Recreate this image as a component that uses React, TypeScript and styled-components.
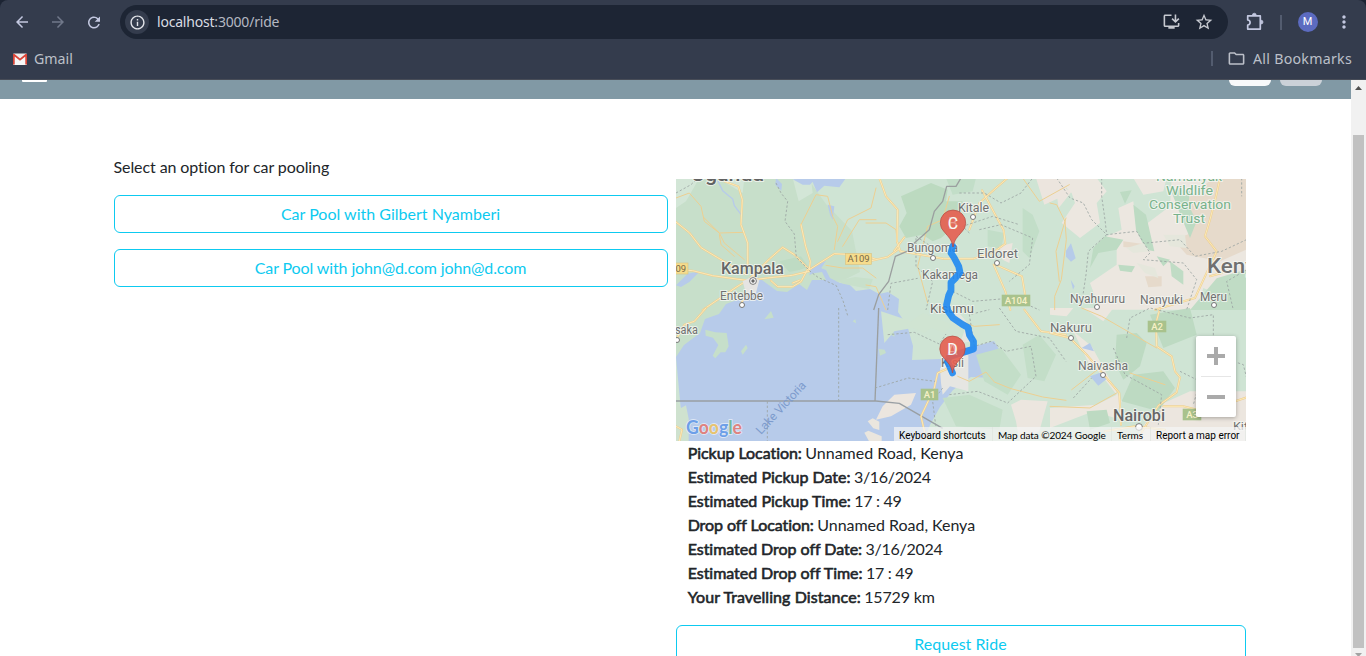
import React from "react";
import styled, { createGlobalStyle } from "styled-components";
import { MdArrowBack, MdArrowForward, MdRefresh, MdInfoOutline, MdStarBorder, MdOutlineFolder, MdMoreVert, MdOutlineInstallDesktop } from "react-icons/md";

const GlobalStyle = createGlobalStyle`
  * { box-sizing: border-box; }
  body { margin: 0; background: #fff; overflow: hidden; font-family: Lato, "Liberation Sans", sans-serif; }
`;

const Window = styled.div`
  display: flex;
  flex-direction: column;
  width: 1366px;
  height: 656px;
  overflow: hidden;
  background: #fff;
`;

const Chrome = styled.header`
  flex: none;
  height: 80px;
  background: #1c2433;
  font-family: "Noto Sans", "Open Sans", sans-serif;
`;

const ChromeInner = styled.div`
  height: 80px;
  background: #343c4d;
  border-radius: 8px 8px 0 0;
  border-bottom: 1px solid #474c57;
`;

const Toolbar = styled.div`
  display: flex;
  align-items: center;
  height: 44px;
  padding: 0 0 0 13px;
  color: #c3c8e0;
`;

const NavIcon = styled.span<{ $dim?: boolean; $gap?: number }>`
  display: flex;
  align-items: center;
  justify-content: center;
  width: 18px;
  height: 18px;
  margin-right: ${(p) => p.$gap ?? 18}px;
  color: ${(p) => (p.$dim ? "#70788a" : "#c3c8e0")};
`;

const AddressBar = styled.div`
  display: flex;
  flex: none;
  align-items: center;
  width: 1108px;
  height: 34px;
  padding: 0 14px 0 5px;
  border-radius: 17px;
  background: #1d2534;
  color: #d5d8df;
`;

const InfoBadge = styled.span`
  display: flex;
  align-items: center;
  justify-content: center;
  width: 24px;
  height: 24px;
  border-radius: 50%;
  background: #343c4d;
  color: #e3e5ea;
`;

const Url = styled.span`
  flex: 1;
  margin-left: 8px;
  font-size: 14px;
  line-height: 20px;
  letter-spacing: -0.2px;
  color: #d9dce3;
  span { color: #b4b8c2; }
`;

const AddressActions = styled.span`
  display: flex;
  gap: 13px;
  color: #c6c9d0;
`;

const ToolbarEnd = styled.div`
  display: flex;
  align-items: center;
  margin-left: 17px;
`;

const Separator = styled.span<{ $height: number; $left?: number }>`
  flex: none;
  width: 1.5px;
  height: ${(p) => p.$height}px;
  margin-left: ${(p) => p.$left ?? 0}px;
  background: #535c6f;
`;

const Avatar = styled.span`
  display: flex;
  align-items: center;
  justify-content: center;
  width: 20px;
  height: 20px;
  margin: 0 16px;
  border-radius: 50%;
  background: #5c6bc0;
  color: #fff;
  font: 400 11px/20px Roboto, sans-serif;
`;

const Bookmarks = styled.div`
  display: flex;
  align-items: center;
  justify-content: space-between;
  height: 29px;
  padding: 0 14px 0 12px;
  color: #bcc0c9;
  font-size: 14.2px;
`;

const Bookmark = styled.span`
  display: flex;
  align-items: center;
`;

const BookmarkText = styled.span<{ $spacing?: number }>`
  margin-left: 6px;
  letter-spacing: ${(p) => p.$spacing ?? 0}px;
  white-space: nowrap;
`;

const FolderIcon = styled(MdOutlineFolder)`
  margin-left: 14px;
  margin-right: 1px;
`;

const Viewport = styled.div`
  display: flex;
  flex: 1;
  min-height: 0;
`;

const Page = styled.main`
  flex: 1;
  overflow: hidden;
  background: #fff;
`;

const SiteBar = styled.div`
  display: flex;
  justify-content: space-between;
  height: 19px;
  padding: 0 29px 0 22px;
  background: #8199a5;
`;

const MenuEdge = styled.span`
  width: 25px;
  height: 2px;
  border-radius: 0 0 1px 1px;
  background: #fff;
`;

const BarButtons = styled.div`
  display: flex;
  gap: 9px;
`;

const BarButton = styled.span<{ $color: string }>`
  width: 42px;
  height: 6px;
  border-radius: 0 0 6px 6px;
  background: ${(p) => p.$color};
`;

const Columns = styled.div`
  display: grid;
  grid-template-columns: 554px 570px;
  column-gap: 8px;
  padding: 56px 0 0 114px;
`;

const Options = styled.section`
  display: flex;
  flex-direction: column;
  gap: 16px;
`;

const Prompt = styled.p`
  margin: 0 0 0 -0.5px;
  font-size: 16px;
  line-height: 24px;
  letter-spacing: -0.09px;
  color: #212529;
`;

const OutlineButton = styled.button<{ $spacing?: number }>`
  flex: none;
  width: 100%;
  height: 38px;
  padding: 0 1px 0 0;
  border: 1px solid #0dcaf0;
  border-radius: 6px;
  background: transparent;
  color: #0dcaf0;
  font: 400 16px/24px Lato, sans-serif;
  letter-spacing: ${(p) => p.$spacing ?? 0.01}px;
`;

const Trip = styled.section`
  padding-top: 24px;
`;

const MapFrame = styled.div`
  position: relative;
  height: 262px;
  overflow: hidden;
`;

const Zoom = styled.div`
  position: absolute;
  right: 10px;
  bottom: 24px;
  display: flex;
  flex-direction: column;
  align-items: center;
  width: 40px;
  height: 81px;
  border-radius: 2px;
  background: #fff;
  box-shadow: 0 1px 4px rgba(0, 0, 0, 0.3);
`;

const Credits = styled.div`
  position: absolute;
  right: 0;
  bottom: 0;
  display: flex;
  align-items: center;
  width: 352px;
  height: 14px;
  color: #000;
  font-size: 10px;
  white-space: nowrap;
`;

const Credit = styled.span<{ $width: number; $roboto?: boolean; $spacing?: number }>`
  width: ${(p) => p.$width}px;
  height: 14px;
  padding-left: 5px;
  border-right: 1px solid rgba(220, 226, 220, 0.6);
  background: rgba(245, 245, 245, 0.7);
  font-family: ${(p) => (p.$roboto ? "Roboto" : "Lato")}, sans-serif;
  line-height: ${(p) => (p.$roboto ? 17 : 16)}px;
  letter-spacing: ${(p) => p.$spacing ?? 0}px;
`;

const Details = styled.dl`
  margin: 0 0 16px;
  padding-left: 11.7px;
  color: #212529;
  font-size: 16px;
  line-height: 24px;
`;

const Detail = styled.div<{ $name: number; $value: number }>`
  display: flex;
  gap: 3.5px;
  height: 24px;
  white-space: nowrap;
  dt { -webkit-text-stroke: 0.6px #212529; letter-spacing: ${(p) => p.$name}px; }
  dd { margin: 0; letter-spacing: ${(p) => p.$value}px; }
`;

const Scrollbar = styled.aside`
  display: flex;
  flex-direction: column;
  align-items: center;
  width: 15px;
  padding-top: 6px;
  background: #f1f1f1;
  svg { flex: none; }
`;

const Thumb = styled.span`
  flex: none;
  width: 11px;
  height: 513px;
  margin: 44px 0 5px;
  background: #c1c1c1;
`;

const Gmail = () => (
  <svg width="16" height="16" viewBox="0 0 16 16">
    <rect x="1" y="2.500" width="14" height="11.500" rx="1" fill="#ececec" />
    <path d="M3 14V5.500l5 4.200 5-4.200V14z" fill="#f7f7f7" />
    <path d="M1 13.500V3h1.500L8 7.600 13.500 3H15v10.500h-1.700V5.400L8 9.800 2.700 5.400v8.100z" fill="#db4437" />
  </svg>
);

const Puzzle = () => (
  <svg width="20" height="20" viewBox="0 0 20 20" fill="none" stroke="#c3c8e0" strokeWidth="1.7" strokeLinejoin="round">
    <path d="M2.700 3.900h12.600v13.200H2.700v-4.100c3.200-.4 3.200-4.600 0-5z" />
    <path d="M7.400 3.100a1.900 1.900 0 0 1 3.800 0zM16.100 8.200a1.900 1.900 0 0 1 0 3.800z" fill="#c3c8e0" strokeWidth=".7" />
  </svg>
);

type TileProps = { x: number; y: number; children: React.ReactNode };
const Tile = ({ x, y, children }: TileProps) => <g transform={`translate(${x} ${y}) scale(.33333)`} strokeLinejoin="round">{children}</g>;

const Road = ({ d, w = 6 }: { d: string; w?: number }) => (
  <g fill="none" strokeLinejoin="round" strokeLinecap="round">
    <path d={d} stroke="#edcf91" strokeWidth={w} />
    {w > 5 && <path d={d} stroke="#fce9b8" strokeWidth={w - 3} />}
  </g>
);
const Border = ({ d }: { d: string }) => <path d={d} fill="none" stroke="#9da6a3" strokeWidth="2.6" strokeDasharray="7 6" />;

type LabelProps = { x: number; y: number; w: number; size?: number; bold?: boolean; color?: string; children: string };
const Label = ({ x, y, w, size = 12, bold, color = "#707070", children }: LabelProps) => (
  <text x={x} y={y} textLength={w} lengthAdjust="spacingAndGlyphs" fontSize={size} fontWeight={bold ? 500 : 400} fill={color}
    stroke="#f5f7f3" strokeOpacity=".8" strokeWidth="2" paintOrder="stroke" strokeLinejoin="round">{children}</text>
);
const Shield = ({ x, y, w, h = 11, green, children }: { x: number; y: number; w: number; h?: number; green?: boolean; children: string }) => (
  <g>
    <rect x={x} y={y} width={w} height={h} fill={green ? "#a9c28c" : "#f6dc8c"} stroke={green ? "#a9c28c" : "#d8c283"} strokeWidth=".6" />
    <text x={x + w / 2} y={y + h / 2 + 3.300} textAnchor="middle" fontSize="9.500" fontWeight={green ? 500 : 400} fill={green ? "#f7f1c7" : "#766a48"}>{children}</text>
  </g>
);
const Town = ({ x, y, r = 2.500 }: { x: number; y: number; r?: number }) => <circle cx={x} cy={y} r={r} fill="#fff" stroke="#777" strokeWidth="1" />;
const Pin = ({ x, y, letter, under }: { x: number; y: number; letter: string; under: string }) => (
  <g opacity=".9">
    <path d={`M${x} ${y}c-1.500-8-4.500-10-8.500-14.800a12.700 12.700 0 1 1 17 0C${x + 4.500} ${y - 10} ${x + 1.500} ${y - 8} ${x} ${y}z`} fill="#e65f51" stroke="#b7463c" strokeWidth=".8" />
    <text x={x} y={y - 18.500} textAnchor="middle" fontSize="16" fill="#fff" fillOpacity=".35">{under}</text>
    <text x={x} y={y - 18.500} textAnchor="middle" fontSize="16" fill="#fff">{letter}</text>
  </g>
);

const RouteMap = () => (
  <svg width="570" height="262" viewBox="0 0 570 262" fontFamily="Roboto, sans-serif" display="block">
    <rect width="570" height="262" fill="#cfe4d4" />
    <path d="M0 0H132L150 25 176 52 184 93 150 110 0 178z" fill="#c7dfca" />
    <Tile x={0} y={-1}>
      <path d="M0 0H70L30 70 0 90zM125 0h80l-5 45-50-30zM350 0h55l5 45-42 25z" fill="#d3e6d7" />
      <path d="M310 250l65-15 25 35-60 12z" fill="#bedbc3" />
    </Tile>
    <Tile x={190} y={-1}>
      <path d="M105 55l90-40 50 20-5 35 50 0-5 60-60 50-25 10-30-20-50 10-20-35 22-40z" fill="#bcdac0" />
      <path d="M240 0h90l-10 40-60 10zM470 90l30 20 20 50-30 80-20-20zM365 155l50 10-10 50-40-10z" fill="#c2dec8" />
      <path d="M510 0h90v50l-65 30zM400 205l40-10-10 60-20-10zM568 20l50 20-40 50z" fill="#ece5de" />
    </Tile>
    <Tile x={374} y={-1}>
      <path d="M20 0h120l30 40-30 35 10 60-60 45-55-45 40-60-10-30zM205 90l45-20 10 90 100-75 5-85H600v390L460 330l-20 65H150l-30-80 80-55 0-50-30-35 45-20zM250 0h100l-10 40-60 10z" fill="#ece7e0" />
      <path d="M390 80l100-80H600v210l-90 40-100-20-40-45 55-20zM220 190l60 8-20 12-40-3zM285 295l50 0 0 30-40 3z" fill="#e6dacb" />
      <path d="M250 80l38 30 25 110-25-5-30-60zM165 175l55 10-20 30-55 10-25 45 10-60zM210 42l35-5-20 40zM205 260l50 5-10 18-35-5zM360 30l60 10-5 40 25 50-20 50-25-60zM320 235l40 10-20 20z" fill="#bddbc3" />
      <path d="M260 255l55 15 10 30-40-15zM340 170l65 0 5 40-50-5zM230 210l50-15 20 25-50 5z" fill="#e5e7dc" />
      <path d="M420 396l80-95 100-30v125zM360 250l40 30 0 40-35-25z" fill="#c0dcc5" />
      <path d="M48 218l15-22 14 45-14 10-15-15zM62 305l12 20-5 10z" fill="#b6cbe9" />
    </Tile>
    <Tile x={374} y={129}>
      <path d="M70 70l55 45 90 165-20 50-65-20-130 50v-85l100-50 40-10zM0 0h70l-20 25-50-5z" fill="#ece7df" />
      <path d="M0 240l60-70 70 0 70 90-60 30-140 10z" fill="#cfe4d4" />
      <path d="M320 295l100-45h180v150H250zM100 0h90l-30 40z" fill="#ece6df" />
      <path d="M200 80l60-5 30 30-20 70-50 40-25-50zM300 20l120-20 20 80-100 40zM250 200l90-10 35 50-50 70-110-30zM110 310l60-5 10 40-60 20z" fill="#bddac2" />
      <path d="M120 205l35-12 15 20-25 20zM95 120l25-15 12 25z" fill="#b5caea" />
    </Tile>
    <path d="M0 178l8-12 16-12 5-14 14-5 7-10 19-7 8-12 5-8 8 6 11 8 10 1 9-6 8-4 9-8 5-7 8 3 4 8 10 5 9 1 7 7 14-2 9 5 9-2 11 7-1 13 4 6 5 7 6 21-1 14 29-1 20-11 15-2 18-5 6 10-10 10 3 17-22-1-18 13-13 17-10 18-11 27H12l-1-22-6-19z" fill="#b7cbea" />
    <path d="M116 94l13-5 4 6 13-2 4 8-14 0-5 10-8-6zM160 102l19-4 18 2-4 10-25-5z" fill="#c8e0cb" />
    <Tile x={0} y={-1}>
      <path d="M300 0l18 18-2 20-18-18zM350 4l70-4-18 20-22 0zM405 0h105l-20 28-45-5-22 20zM455 80l20 5-5 40-8-15zM0 322l35-35 37-7-32 32-25 15z" fill="#b7cbea" />
      <path d="M125 8l15 30 30 25 5 20 20 26" fill="none" stroke="#b7cbea" strokeWidth="4" />
      <path d="M405 268l25-10 20-10-18 28-32 16z" fill="#b7cbea" />
    </Tile>
    <Tile x={0} y={129}>
      <path d="M88 65l30 8 34 2 6 40-10 18-14 0-16 18-8-8 17-32-16-22-22-6zM195 130l15-20 5 10-15 20zM265 34l20-25 8 20zM530 40l8-6 2 12z" fill="#c6dfca" />
      <path d="M0 275l15 25 15-8 8 40 0 70H0z" fill="#cfe2cf" />
      <path d="M575 340l15-9 20 10v25l-18-5zM565 374l12-6 40 17v20h-35z" fill="#eae6de" />
    </Tile>
    <Tile x={190} y={129}>
      <path d="M45 10l90 30 35-25 90 35-25 25-40-15-20 15-35-15-55 10-30 35z" fill="#d0e4d2" />
      <path d="M38 123l18 2 4 10-18 8zM70 78l14-4 2 12z" fill="#c6dfca" />
      <path d="M222 180l60-40 25 0 0 110-55-15-22 25-5-35z" fill="#e6e6e2" />
      <path d="M85 260l65-5-15 35-60 35-45 10 20-40zM435 290l30-15 80 5-25 90-60 30-10-60z" fill="#ece6df" />
      <path d="M330 140l75-20 60 80-40 60-70-40zM470 110l50-30 50 60-35 80-50-10zM230 270l80-10 100 45-10 60-130-10z" fill="#c3dec8" />
      <path d="M252 35l45 30-15 40 45-5-10-40-50-60z" fill="#e4e6df" />
    </Tile>
    <Tile x={0} y={-1}>
      <Road w={3} d="M0 60L40 45 75 85 85 130 130 165 145 195 205 245M85 120L130 165 205 163M130 170l5 30 40 35M375 140l45-90 35 5 15 60 15 30-10 70M500 205l50-80h50M600 30l-15 60-70 35-30 65M450 262l50 8h60l40 30" />
      <Road d="M145 10l42 15 12 40-4 75 20 55v75M0 132l40 32 35 45 50 30 85 50M0 275l50 3 60 15 100 14M80 396l100-68 40-25 60-60 40-35 35 22 45 45M400 275l75-48 90 5 35 12M375 140l14 65 14 45-4 30-50 12-75 8-50 6M285 308l20 18 45 0 25-15 20-38M350 315l20-8M220 305l-12 50-15 25" />
      <path d="M200 310l30-15 20 12-12 45-30-12z" fill="#e5e4e2" />
      <Border d="M0 45l45-25 20-20M300 15l15 30 20 25-8 60 28 38 6 70 45 45 20 15 55 25 20 45 15 48" />
    </Tile>
    <Tile x={190} y={-1}>
      <Road w={3} d="M0 135l60 0 30 20 5 50M60 396l-30-70-30-5M250 55l-20 70-45 20-30 120 30 110M600 120l-30 100 10 90M470 0l50 70 90-50" />
      <Road d="M40 0l20 55 35 40-2 95 10 30 130 22 90 0 60-20 35-25-5-40-65-120M0 252l65-15 35-25M115 178l-30 40M310 155l30-80 50-45 35-30M383 260l35 80 15 56M388 260l80 35 10 60" />
      <path d="M285 0l-15 25-28 0-12 45-25 30-15 55-45 40-22 25-35 15-20 75-30 40-15 46" fill="none" stroke="#9b9f9f" strokeWidth="4" />
      <Border d="M280 45h75l50 30 60-30 35-45M340 155l65-15 95 40-10 80-60 50M210 215l-60-40v90l50 45-20 86M260 340l60 30 120-10 80 36M310 165l-20-20 90-30 80 25M65 396l10-80 80-15" />
    </Tile>
    <Tile x={374} y={-1}>
      <Road w={3} d="M0 75l20 5 25 50 4 55-15 120-20 50v40" />
      <Road d="M510 0l-12 55-18 70-15 50 35 45-35 75-30 65-120 35M480 295l35-10" />
      <Border d="M20 0l40 60 40 15 25 50 45 45-55 50-7 70-15 100M155 0v55l10 70 5 45 90-10 40 65-20 20 120 10 40 50-30 90M290 195l100-10 45 50 80-15 85-40M575 0v55M600 270l-70 40 20 86" />
    </Tile>
    <Tile x={0} y={129}>
      <Road w={6} d="M90 0L55 40 25 50 0 95M0 355l18 10-8 35" />
      <path d="M0 279h600M600 279l70 7 130 75" fill="none" stroke="#999fa3" strokeWidth="4" />
      <Border d="M488 0v278M274 280v120" />
    </Tile>
    <Tile x={190} y={129}>
      <path d="M38 0L27 279" fill="none" stroke="#9b9f9f" strokeWidth="4" />
      <Road w={3} d="M260 30l65 25 75-5M275 205l35 15 50-28 25 30 50 20 95 25 70 10" />
      <Road d="M180 390l-15-65 40-85 10-45 45-20M600 80l-75-10-50-65" />
      <Border d="M65 80l80-7 75 35 20-30M27 240l100-30 80 10M250 260l85-10 90 35 85-80-15-90-75 15-45-30-50 15-15-95 60-15M400 0l50 70 100 20 50 70M230 240l-30 40 10 80" />
    </Tile>
    <Tile x={374} y={129}>
      <Road w={3} d="M95 0l60 25 130 75 35 20M0 295l120 5 80-45M65 245l90-70M240 195l105 35" />
      <Road d="M0 75l60 15 50 50 98 115 5 95M330 0l-12 45 2 70 45 30 10 45 15 18-10 45-55 40-50 80M340 295h60l60 15M600 265l-60 20M165 370l90-15 90 10" />
      <Border d="M230 90l10-60 60-30 120 30 70-10v120l90 30 15 60M190 120l35 80 110 60-10 90M70 270l55-60M390 190l60 30-20 70" />
    </Tile>
    <Label x={15} y={2} w={73} size={21} bold color="#626262">Uganda</Label>
    <Label x={45} y={95} w={63} size={16} bold color="#666">Kampala</Label>
    <Town x={77} y={102} r={3.400} /><circle cx="77" cy="102" r="1.700" fill="#666" />
    <Label x={44} y={120.500} w={43} size={12}>Entebbe</Label><Town x={66} y={126} />
    <Label x={282} y={32.500} w={31} size={12}>Kitale</Label><Town x={297} y={38} />
    <Label x={231} y={73} w={51} size={12}>Bungoma</Label><Town x={257} y={79} />
    <Label x={301} y={78.500} w={41} size={13}>Eldoret</Label><Town x={321} y={84} />
    <Label x={246} y={100} w={56} size={12}>Kakamega</Label>
    <Label x={254} y={133.500} w={44} size={13} color="#666">Kisumu</Label>
    <Label x={265} y={188} w={23} size={12}>Kisii</Label>
    <Label x={394} y={123.500} w={55} size={12}>Nyahururu</Label><Town x={421} y={128} />
    <Label x={464} y={125} w={43} size={12}>Nanyuki</Label>
    <Label x={524} y={121.500} w={27} size={12}>Meru</Label><Town x={538} y={126} />
    <Label x={374} y={152.500} w={42} size={13}>Nakuru</Label><Town x={395} y={159} />
    <Label x={402} y={191} w={50} size={12}>Naivasha</Label><Town x={427} y={196} />
    <Label x={437} y={241.500} w={52} size={16} bold color="#666">Nairobi</Label><Town x={463} y={248} r={3.400} />
    <Label x={531} y={93.500} w={61} size={21} bold color="#707070">Kenya</Label>
    <Label x={-1} y={155} w={23} size={12}>saka</Label><Town x={1} y={161} />
    <Label x={557} y={251} w={25} size={11}>Kitui</Label>
    <g>
      <Label x={480} y={2} w={66} size={12} color="#78b28b">Namunyak</Label>
      <Label x={490} y={16} w={47} size={12} color="#78b28b">Wildlife</Label>
      <Label x={473} y={30} w={82} size={12} color="#78b28b">Conservation</Label>
      <Label x={497} y={44} w={32} size={12} color="#78b28b">Trust</Label>
    </g>
    <text x="0" y="0" transform="translate(85 256) rotate(-47)" textLength="67" fontSize="12" fill="#7d9bcd">Lake Victoria</text>
    <Shield x={-14} y={84} w={26}>A109</Shield>
    <Shield x={169.500} y={74.500} w={26}>A109</Shield>
    <Shield x={326} y={116} w={28} green>A104</Shield>
    <Shield x={245} y={210} w={17} green>A1</Shield>
    <Shield x={472} y={142} w={18} green>A2</Shield>
    <Shield x={507} y={230} w={18} green>A3</Shield>
    <path d="M276.700 67.300L275 74 278.300 79 282.700 87.300 284 93.500 280 98.500 275 103.500 275 111.500 272.700 116.500 270.500 126 272 132 277 139 286.500 145.500 292 148.500 293.500 156 297.500 162.500 297.500 170 290 172.500 273.500 177.500 271.500 182.500 276.500 194"
      fill="none" stroke="#1e88f2" strokeOpacity=".9" strokeWidth="6.800" strokeLinejoin="round" strokeLinecap="round" />
    <Pin x={277} y={68} letter="C" under="B" />
    <Pin x={276.500} y={194} letter="D" under="A" />
    <text x="10" y="255" fontFamily="Lato, sans-serif" fontSize="19" fontWeight="700" textLength="56" lengthAdjust="spacingAndGlyphs" stroke="#fff" strokeOpacity=".55" strokeWidth="1.800" paintOrder="stroke">
      <tspan fill="#6d9fe8">G</tspan><tspan fill="#df827f">o</tspan><tspan fill="#e7c36f">o</tspan><tspan fill="#6d9fe8">g</tspan><tspan fill="#77b999">l</tspan><tspan fill="#df827f">e</tspan>
    </text>
  </svg>
);

const details: { name: string; value: string; nameSpacing: number; valueSpacing: number }[] = [
  { name: "Pickup Location:", value: "Unnamed Road, Kenya", nameSpacing: -0.05, valueSpacing: -0.02 },
  { name: "Estimated Pickup Date:", value: "3/16/2024", nameSpacing: -0.01, valueSpacing: -0.28 },
  { name: "Estimated Pickup Time:", value: "17 : 49", nameSpacing: -0.01, valueSpacing: -0.3 },
  { name: "Drop off Location:", value: "Unnamed Road, Kenya", nameSpacing: -0.07, valueSpacing: -0.03 },
  { name: "Estimated Drop off Date:", value: "3/16/2024", nameSpacing: -0.04, valueSpacing: -0.28 },
  { name: "Estimated Drop off Time:", value: "17 : 49", nameSpacing: -0.04, valueSpacing: -0.3 },
  { name: "Your Travelling Distance:", value: "15729 km", nameSpacing: 0.08, valueSpacing: -0.15 },
];

export default function App() {
  return (
    <Window>
      <GlobalStyle />
      <Chrome>
        <ChromeInner>
          <Toolbar>
            <NavIcon><MdArrowBack size={18} /></NavIcon>
            <NavIcon $dim><MdArrowForward size={18} /></NavIcon>
            <NavIcon $gap={17}><MdRefresh size={19} /></NavIcon>
            <AddressBar>
              <InfoBadge><MdInfoOutline size={17} /></InfoBadge>
              <Url>localhost<span>:3000/ride</span></Url>
              <AddressActions><MdOutlineInstallDesktop size={19} /><MdStarBorder size={20} /></AddressActions>
            </AddressBar>
            <ToolbarEnd>
              <Puzzle />
              <Separator $height={15} $left={15} />
              <Avatar>M</Avatar>
              <MdMoreVert size={20} />
            </ToolbarEnd>
          </Toolbar>
          <Bookmarks>
            <Bookmark><Gmail /><BookmarkText>Gmail</BookmarkText></Bookmark>
            <Bookmark><Separator $height={15} /><FolderIcon size={19} /><BookmarkText $spacing={0.27}>All Bookmarks</BookmarkText></Bookmark>
          </Bookmarks>
        </ChromeInner>
      </Chrome>
      <Viewport>
        <Page>
          <SiteBar>
            <MenuEdge />
            <BarButtons><BarButton $color="#f8f9fa" /><BarButton $color="#cbd1d8" /></BarButtons>
          </SiteBar>
          <Columns>
            <Options>
              <Prompt>Select an option for car pooling</Prompt>
              <OutlineButton>Car Pool with Gilbert Nyamberi</OutlineButton>
              <OutlineButton $spacing={-0.12}>Car Pool with john@d.com john@d.com</OutlineButton>
            </Options>
            <Trip>
              <MapFrame>
                <RouteMap />
                <Zoom>
                  <svg width="40" height="81" viewBox="0 0 40 81">
                    <path d="M11 20h18M20 11v18M11 61h18" stroke="#aaa" strokeWidth="4" />
                    <path d="M5 40.500h30" stroke="#e6e6e6" />
                  </svg>
                </Zoom>
                <Credits>
                  <Credit $width={99} $roboto>Keyboard shortcuts</Credit>
                  <Credit $width={119} $spacing={-0.08}>Map data ©2024 Google</Credit>
                  <Credit $width={39}>Terms</Credit>
                  <Credit $width={95} $roboto>Report a map error</Credit>
                </Credits>
              </MapFrame>
              <Details>
                {details.map((d) => (
                  <Detail key={d.name} $name={d.nameSpacing} $value={d.valueSpacing}><dt>{d.name}</dt><dd>{d.value}</dd></Detail>
                ))}
              </Details>
              <OutlineButton>Request Ride</OutlineButton>
            </Trip>
          </Columns>
        </Page>
        <Scrollbar>
          <svg width="7" height="5" viewBox="0 0 7 5"><path d="M0 4L3.500 0 7 4z" fill="#505050" /></svg>
          <Thumb />
          <svg width="7" height="5" viewBox="0 0 7 5"><path d="M0 0L3.500 4 7 0z" fill="#a3a3a3" /></svg>
        </Scrollbar>
      </Viewport>
    </Window>
  );
}
